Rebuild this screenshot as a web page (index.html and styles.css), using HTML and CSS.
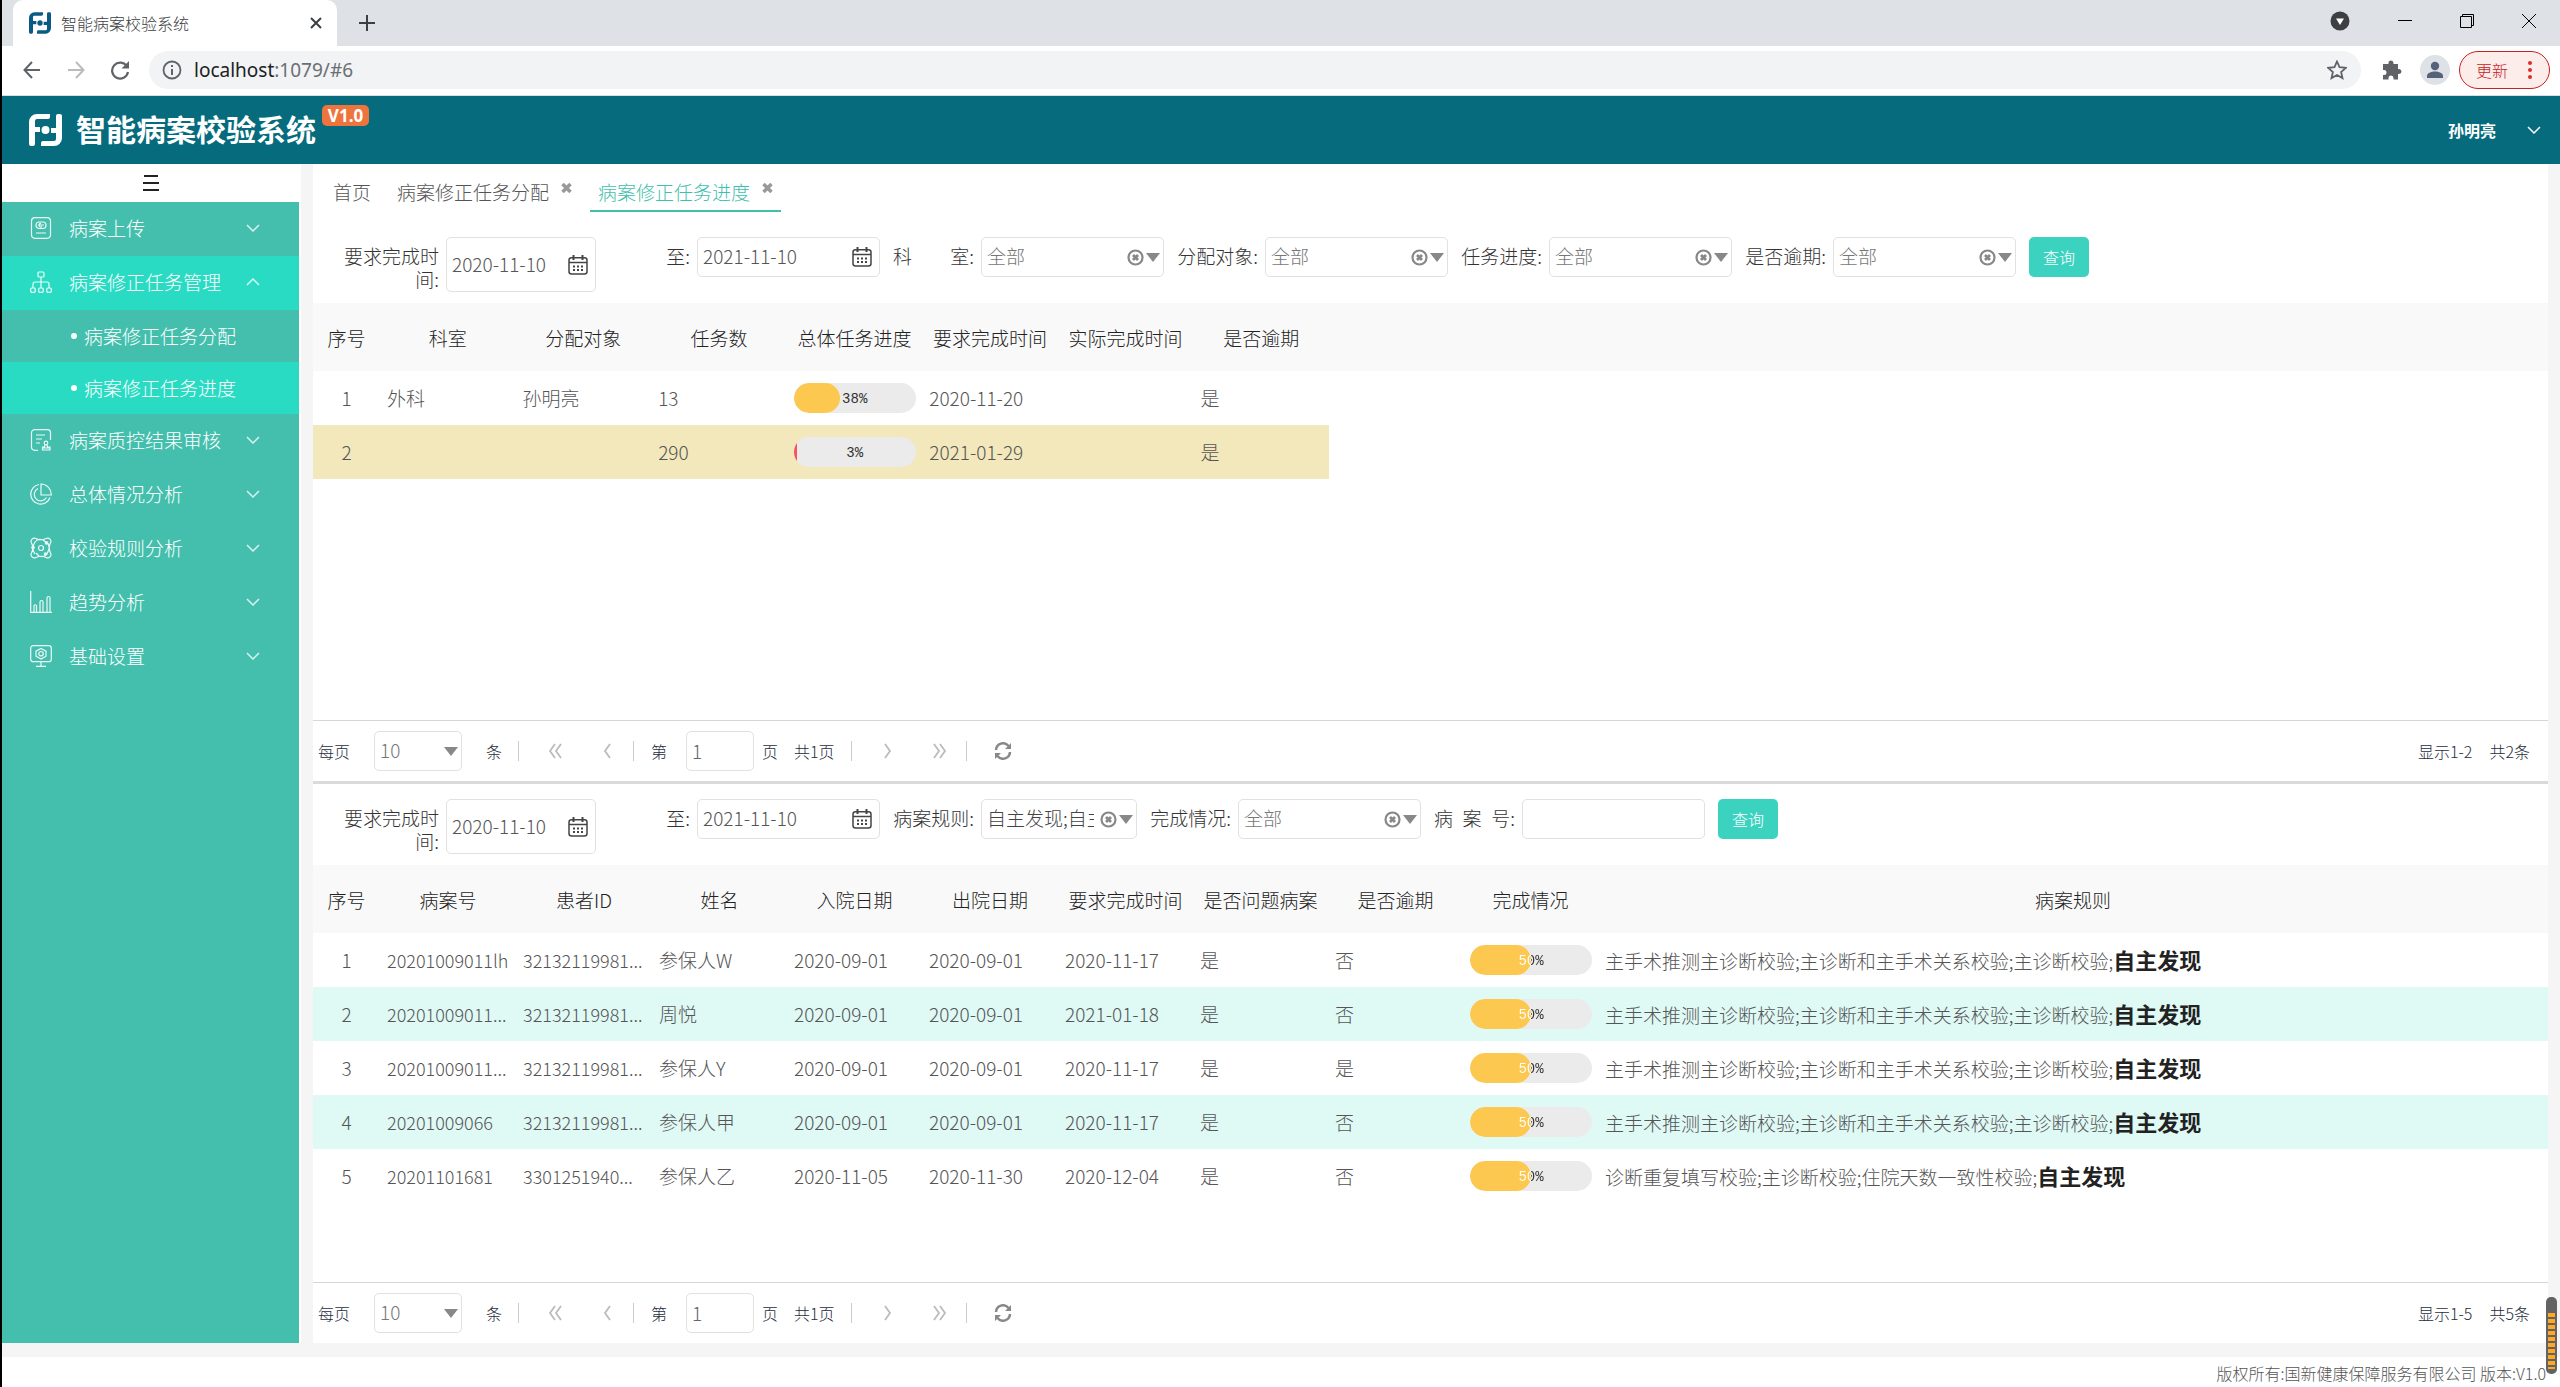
FILE: index.html
```html
<!DOCTYPE html>
<html lang="zh-CN">
<head>
<meta charset="utf-8">
<title>智能病案校验系统</title>
<link rel="stylesheet" href="styles.css">
</head>
<body>
<svg class="defs" aria-hidden="true">
  <symbol id="logo" viewBox="0 0 33 32"><path d="M0 30V8a8 8 0 0 1 8-8h13v3a2 2 0 0 1-2 2H8a2 2 0 0 0-2 2v6h5v5H6v12a2 2 0 0 1-2 2H2a2 2 0 0 1-2-2zM33 2v22a8 8 0 0 1-8 8H12v-3a2 2 0 0 1 2-2h11a2 2 0 0 0 2-2v-6h-5v-5h5V2a2 2 0 0 1 2-2h2a2 2 0 0 1 2 2z" fill="currentColor"/><circle cx="16.500" cy="16" r="4" fill="currentColor"/></symbol>
  <symbol id="down" viewBox="0 0 14 8"><path d="M1 1l6 6 6-6" fill="none" stroke="currentColor" stroke-width="1.500"/></symbol>
  <symbol id="cal" viewBox="0 0 20 20"><rect x="1" y="2.800" width="18" height="16.200" rx="2.500" fill="none" stroke="currentColor" stroke-width="1.500"/><path d="M1 7.500h18" stroke="currentColor" stroke-width="1.500"/><path d="M5.500 0v5M14.500 0v5" stroke="currentColor" stroke-width="2"/><path d="M5 11.500h2m2 0h2m2 0h2M5 15h2m2 0h2m2 0h2" stroke="currentColor" stroke-width="2"/></symbol>
  <symbol id="clear" viewBox="0 0 17 17"><circle cx="8.500" cy="8.500" r="7" fill="none" stroke="currentColor" stroke-width="2.200"/><path d="M6 6l5 5M11 6l-5 5" stroke="currentColor" stroke-width="2.800"/></symbol>
  <symbol id="caret" viewBox="0 0 14 9"><path d="M0 0h14L7 9z" fill="currentColor"/></symbol>
  <symbol id="cross" viewBox="0 0 11 12"><path d="M1.500 2l8 8M9.500 2l-8 8" stroke="currentColor" stroke-width="3.500"/></symbol>
  <symbol id="first" viewBox="0 0 14 18"><path d="M7 2L2 9l5 7M13 2L8 9l5 7" fill="none" stroke="currentColor" stroke-width="1.800"/></symbol>
  <symbol id="prev" viewBox="0 0 14 18"><path d="M10 2L5 9l5 7" fill="none" stroke="currentColor" stroke-width="1.800"/></symbol>
  <symbol id="next" viewBox="0 0 14 18"><path d="M4 2l5 7-5 7" fill="none" stroke="currentColor" stroke-width="1.800"/></symbol>
  <symbol id="last" viewBox="0 0 14 18"><path d="M1 2l5 7-5 7M7 2l5 7-5 7" fill="none" stroke="currentColor" stroke-width="1.800"/></symbol>
  <symbol id="reload" viewBox="0 0 18 18"><path d="M2 8a7 7 0 0 1 12.500-4M16 10a7 7 0 0 1-12.500 4" fill="none" stroke="currentColor" stroke-width="2.500"/><path d="M17 1v6h-6zM1 17v-6h6z" fill="currentColor"/></symbol>
</svg>

<header class="chrome">
  <div class="tabstrip">
    <div class="btab">
      <svg class="favicon"><use href="#logo"/></svg>
      <span>智能病案校验系统</span>
      <button class="plain btab-close" aria-label="关闭"><svg width="12" height="12" viewBox="0 0 12 12"><path d="M1 1l10 10M11 1L1 11" stroke="#3c4043" stroke-width="2"/></svg></button>
    </div>
    <button class="plain newtab" aria-label="新标签页"><svg width="16" height="16" viewBox="0 0 16 16"><path d="M8 0v16M0 8h16" stroke="#3c4043" stroke-width="2"/></svg></button>
    <div class="winctl">
      <svg width="20" height="20" viewBox="0 0 20 20"><circle cx="10" cy="10" r="9.500" fill="#3c4043"/><path d="M6 7.500h8L10 14z" fill="#fff"/></svg>
      <svg width="14" height="14" viewBox="0 0 14 14"><path d="M0 6.500h14" stroke="#000"/></svg>
      <svg width="14" height="14" viewBox="0 0 14 14"><path d="M.5 2.500h11v11H.5zM2.500 2.500v-2h11v11h-2" fill="none" stroke="#000"/></svg>
      <svg width="14" height="14" viewBox="0 0 14 14"><path d="M0 0l14 14M14 0L0 14" stroke="#000"/></svg>
    </div>
  </div>
  <div class="toolbar">
    <button class="plain nav" aria-label="后退"><svg width="18" height="18" viewBox="0 0 18 18"><path d="M17 9H2M9 1L1.500 9 9 17" fill="none" stroke="#5f6368" stroke-width="2"/></svg></button>
    <button class="plain nav" aria-label="前进"><svg width="18" height="18" viewBox="0 0 18 18"><path d="M1 9h15M9 1l7.500 8L9 17" fill="none" stroke="#b9bbbe" stroke-width="2"/></svg></button>
    <button class="plain nav" aria-label="刷新"><svg width="20" height="20" viewBox="0 0 20 20"><path d="M17 6.500A8 8 0 1 0 18 12" fill="none" stroke="#5f6368" stroke-width="2.200"/><path d="M19 1v7.500h-7.500z" fill="#5f6368"/></svg></button>
    <div class="address">
      <svg width="20" height="20" viewBox="0 0 20 20"><circle cx="10" cy="10" r="8.500" fill="none" stroke="#5f6368" stroke-width="1.800"/><path d="M10 9v6M10 5v2" stroke="#5f6368" stroke-width="2"/></svg>
      <span class="url"><b>localhost</b>:1079/#6</span>
      <svg width="20" height="20" viewBox="0 0 20 20"><path d="M10 1.500l2.500 5.700 6.300.6-4.700 4.200 1.400 6.100L10 15l-5.500 3.100L5.900 12 1.200 7.800l6.300-.6z" fill="none" stroke="#5f6368" stroke-width="1.800"/></svg>
    </div>
    <svg class="ext" width="20" height="20" viewBox="0 0 20 20"><path d="M1 4h5.500V3a2.500 2.500 0 0 1 5 0v1H16v5h1a2.500 2.500 0 0 1 0 5h-1v5.500h-4.500V18a2.500 2.500 0 0 0-5 0v1.500H1V15h1a2.500 2.500 0 0 0 0-5H1z" fill="#5f6368"/></svg>
    <svg class="avatar" width="30" height="30" viewBox="0 0 30 30"><circle cx="15" cy="15" r="15" fill="#dee1e6"/><circle cx="15" cy="11" r="4.200" fill="#56617a"/><path d="M7 23v-2c0-3 4-4.500 8-4.500s8 1.500 8 4.500v2z" fill="#56617a"/></svg>
    <button class="update">更新<svg width="4" height="18" viewBox="0 0 4 18"><g fill="#d93025"><circle cx="2" cy="2" r="2"/><circle cx="2" cy="9" r="2"/><circle cx="2" cy="16" r="2"/></g></svg></button>
  </div>
</header>

<header class="apphead">
  <svg class="brand"><use href="#logo"/></svg>
  <h1>智能病案校验系统</h1>
  <span class="ver">V1.0</span>
  <button class="plain user">孙明亮<svg width="14" height="8"><use href="#down"/></svg></button>
</header>

<div class="body">
  <nav class="side">
    <button class="plain burger" aria-label="菜单"><svg width="16" height="16" viewBox="0 0 16 16"><path d="M1 1h14M0 8h16M0 15h16" stroke="#222" stroke-width="2"/></svg></button>
    <button class="plain item"><svg class="ico" viewBox="0 0 22 22"><rect x="1.500" y=".7" width="19" height="20.600" rx="3.500"/><rect x="6" y="5" width="10" height="6.500" rx="3"/><path d="M9 8h5M11 6.500a1.800 1.800 0 1 0 1 3M6 16h10"/></svg>病案上传<svg class="arr"><use href="#down"/></svg></button>
    <button class="plain item on open"><svg class="ico" viewBox="0 0 22 22"><rect x="8" y="1" width="6" height="5" rx="1"/><rect x=".7" y="17" width="4.500" height="4.300" rx="1"/><rect x="8.700" y="17" width="4.500" height="4.300" rx="1"/><rect x="16.800" y="17" width="4.500" height="4.300" rx="1"/><path d="M11 6v11M3 17v-4a2 2 0 0 1 2-2h12a2 2 0 0 1 2 2v4"/></svg>病案修正任务管理<svg class="arr"><use href="#down"/></svg></button>
    <a class="sub" href="#5">病案修正任务分配</a>
    <a class="sub on" href="#6">病案修正任务进度</a>
    <button class="plain item"><svg class="ico" viewBox="0 0 22 22"><path d="M8 21.300H4.500a3 3 0 0 1-3-3v-14.600a3 3 0 0 1 3-3h13a3 3 0 0 1 3 3V11M6 6h9M6 10h6M6 14h4"/><circle cx="16" cy="14" r="1.800"/><path d="M15 16l-.5 2h-2v3h7.500v-3h-2.500l-.5-2M12.500 19h7.500"/></svg>病案质控结果审核<svg class="arr"><use href="#down"/></svg></button>
    <button class="plain item"><svg class="ico" viewBox="0 0 22 22"><path d="M9 1.500A9.900 9.900 0 1 0 20 14.500M11 1v11h10.300A10.500 10.500 0 0 0 11 1zM8 5.500a6.500 6.500 0 1 0 8.500 9"/></svg>总体情况分析<svg class="arr"><use href="#down"/></svg></button>
    <button class="plain item"><svg class="ico" viewBox="0 0 22 22"><path d="M6 1.500Q11 4 16 1.500C19 0 22 3 20.500 6Q18 11 20.500 16C22 19 19 22 16 20.500Q11 18 6 20.500C3 22 0 19 1.500 16Q4 11 1.500 6C0 3 3 0 6 1.500zM5 5Q7 2 11 2.500M17 17Q15 20 11 19.500M5 17Q2.500 14 3 10M17 5Q19.500 8 19 12M6 16l3 3M13 3l4 3M3 9l2-4M17 17l2-5"/><circle cx="11" cy="11" r="2.500"/><g fill="#fff"><circle cx="3" cy="10.500" r="1.200"/><circle cx="16.500" cy="6" r="1.200"/><circle cx="15.500" cy="17" r="1.200"/></g></svg>校验规则分析<svg class="arr"><use href="#down"/></svg></button>
    <button class="plain item"><svg class="ico" viewBox="0 0 22 22"><path d="M.7 0v21.300H22M4 21v-6a1.200 1.200 0 0 1 2.500 0v6M10 21V11a1.200 1.200 0 0 1 3 0v10M17 21V7a1.200 1.200 0 0 1 3 0v14"/></svg>趋势分析<svg class="arr"><use href="#down"/></svg></button>
    <button class="plain item"><svg class="ico" viewBox="0 0 22 22"><rect x=".7" y=".7" width="20.600" height="16" rx="2.500"/><path d="M11 17v4M6 21.300h10M11 3.500l5 2.700v5L11 14l-5-2.800v-5z"/><circle cx="11" cy="8.700" r="2.200"/></svg>基础设置<svg class="arr"><use href="#down"/></svg></button>
  </nav>

  <main class="main">
    <section class="panel">
      <div class="tabs">
        <a class="tab" href="#1">首页</a>
        <a class="tab" href="#5">病案修正任务分配<svg class="x"><use href="#cross"/></svg></a>
        <a class="tab active" href="#6">病案修正任务进度<svg class="x"><use href="#cross"/></svg></a>
      </div>
      <form class="filter">
        <div class="field"><label class="wrap" for="a1">要求完成时间:</label><span class="box tall"><input id="a1" value="2020-11-10"><svg class="cal"><use href="#cal"/></svg></span></div>
        <div class="field"><label for="a2">至:</label><span class="box"><input id="a2" value="2021-11-10"><svg class="cal"><use href="#cal"/></svg></span></div>
        <div class="field"><label class="spread" for="a3"><span>科</span><span>室:</span></label><span class="box"><select id="a3"><option>全部</option></select><svg class="clear"><use href="#clear"/></svg><svg class="caret"><use href="#caret"/></svg></span></div>
        <div class="field"><label for="a4">分配对象:</label><span class="box"><select id="a4"><option>全部</option></select><svg class="clear"><use href="#clear"/></svg><svg class="caret"><use href="#caret"/></svg></span></div>
        <div class="field"><label for="a5">任务进度:</label><span class="box"><select id="a5"><option>全部</option></select><svg class="clear"><use href="#clear"/></svg><svg class="caret"><use href="#caret"/></svg></span></div>
        <div class="field"><label for="a6">是否逾期:</label><span class="box"><select id="a6"><option>全部</option></select><svg class="clear"><use href="#clear"/></svg><svg class="caret"><use href="#caret"/></svg></span></div>
        <button class="query" type="button">查询</button>
      </form>
      <div class="grid">
        <table class="tasks">
          <thead><tr><th class="no">序号</th><th>科室</th><th>分配对象</th><th>任务数</th><th>总体任务进度</th><th>要求完成时间</th><th>实际完成时间</th><th>是否逾期</th></tr></thead>
          <tbody>
            <tr><td class="no">1</td><td>外科</td><td>孙明亮</td><td>13</td><td><div class="bar"><div class="fill" style="width:38%"></div><span class="pct">38%</span></div></td><td>2020-11-20</td><td></td><td>是</td></tr>
            <tr class="sel"><td class="no">2</td><td></td><td></td><td>290</td><td><div class="bar"><div class="fill low" style="width:3%"></div><span class="pct">3%</span></div></td><td>2021-01-29</td><td></td><td>是</td></tr>
          </tbody>
        </table>
      </div>
      <div class="pager">
        <label for="p1">每页</label>
        <span class="box size"><select id="p1"><option>10</option></select><svg class="caret"><use href="#caret"/></svg></span>
        <span class="unit">条</span><i class="sep"></i>
        <button class="plain pg" aria-label="首页"><svg><use href="#first"/></svg></button>
        <button class="plain pg" aria-label="上一页"><svg><use href="#prev"/></svg></button><i class="sep tight"></i>
        <label class="nth" for="n1">第</label><input class="page" id="n1" value="1"><span class="ye">页</span><span class="total">共1页</span><i class="sep"></i>
        <button class="plain pg" aria-label="下一页"><svg><use href="#next"/></svg></button>
        <button class="plain pg" aria-label="末页"><svg><use href="#last"/></svg></button><i class="sep tight"></i>
        <button class="plain pg dark" aria-label="刷新"><svg><use href="#reload"/></svg></button>
        <span class="info"><span>显示1-2</span><span>共2条</span></span>
      </div>
    </section>

    <section class="panel second">
      <form class="filter">
        <div class="field"><label class="wrap" for="b1">要求完成时间:</label><span class="box tall"><input id="b1" value="2020-11-10"><svg class="cal"><use href="#cal"/></svg></span></div>
        <div class="field"><label for="b2">至:</label><span class="box"><input id="b2" value="2021-11-10"><svg class="cal"><use href="#cal"/></svg></span></div>
        <div class="field"><label for="b3">病案规则:</label><span class="box narrow"><select id="b3"><option>自主发现;自主发现</option></select><svg class="clear"><use href="#clear"/></svg><svg class="caret"><use href="#caret"/></svg></span></div>
        <div class="field"><label for="b4">完成情况:</label><span class="box"><select id="b4"><option>全部</option></select><svg class="clear"><use href="#clear"/></svg><svg class="caret"><use href="#caret"/></svg></span></div>
        <div class="field"><label class="spread" for="b5"><span>病</span><span>案</span><span>号:</span></label><span class="box"><input id="b5"></span></div>
        <button class="query" type="button">查询</button>
      </form>
      <div class="grid">
        <table class="cases">
          <colgroup><col class="c-no"><col class="c-wide"><col class="c-wide"><col class="c-std"><col class="c-std"><col class="c-wide"><col class="c-std"><col class="c-std"><col class="c-std"><col class="c-std"><col></colgroup>
          <thead><tr><th class="no">序号</th><th>病案号</th><th>患者ID</th><th>姓名</th><th>入院日期</th><th>出院日期</th><th>要求完成时间</th><th>是否问题病案</th><th>是否逾期</th><th>完成情况</th><th>病案规则</th></tr></thead>
          <tbody>
            <tr><td class="no">1</td><td class="id">20201009011lh</td><td class="id">32132119981...</td><td>参保人W</td><td>2020-09-01</td><td>2020-09-01</td><td>2020-11-17</td><td>是</td><td>否</td><td><div class="bar"><div class="fill" style="width:50%"></div><span class="pct half">50%</span></div></td><td>主手术推测主诊断校验;主诊断和主手术关系校验;主诊断校验;<strong>自主发现</strong></td></tr>
            <tr class="alt"><td class="no">2</td><td class="id">20201009011...</td><td class="id">32132119981...</td><td>周悦</td><td>2020-09-01</td><td>2020-09-01</td><td>2021-01-18</td><td>是</td><td>否</td><td><div class="bar"><div class="fill" style="width:50%"></div><span class="pct half">50%</span></div></td><td>主手术推测主诊断校验;主诊断和主手术关系校验;主诊断校验;<strong>自主发现</strong></td></tr>
            <tr><td class="no">3</td><td class="id">20201009011...</td><td class="id">32132119981...</td><td>参保人Y</td><td>2020-09-01</td><td>2020-09-01</td><td>2020-11-17</td><td>是</td><td>是</td><td><div class="bar"><div class="fill" style="width:50%"></div><span class="pct half">50%</span></div></td><td>主手术推测主诊断校验;主诊断和主手术关系校验;主诊断校验;<strong>自主发现</strong></td></tr>
            <tr class="alt"><td class="no">4</td><td class="id">20201009066</td><td class="id">32132119981...</td><td>参保人甲</td><td>2020-09-01</td><td>2020-09-01</td><td>2020-11-17</td><td>是</td><td>否</td><td><div class="bar"><div class="fill" style="width:50%"></div><span class="pct half">50%</span></div></td><td>主手术推测主诊断校验;主诊断和主手术关系校验;主诊断校验;<strong>自主发现</strong></td></tr>
            <tr><td class="no">5</td><td class="id">20201101681</td><td class="id">3301251940...</td><td>参保人乙</td><td>2020-11-05</td><td>2020-11-30</td><td>2020-12-04</td><td>是</td><td>否</td><td><div class="bar"><div class="fill" style="width:50%"></div><span class="pct half">50%</span></div></td><td>诊断重复填写校验;主诊断校验;住院天数一致性校验;<strong>自主发现</strong></td></tr>
          </tbody>
        </table>
      </div>
      <div class="pager">
        <label for="p2">每页</label>
        <span class="box size"><select id="p2"><option>10</option></select><svg class="caret"><use href="#caret"/></svg></span>
        <span class="unit">条</span><i class="sep"></i>
        <button class="plain pg" aria-label="首页"><svg><use href="#first"/></svg></button>
        <button class="plain pg" aria-label="上一页"><svg><use href="#prev"/></svg></button><i class="sep tight"></i>
        <label class="nth" for="n2">第</label><input class="page" id="n2" value="1"><span class="ye">页</span><span class="total">共1页</span><i class="sep"></i>
        <button class="plain pg" aria-label="下一页"><svg><use href="#next"/></svg></button>
        <button class="plain pg" aria-label="末页"><svg><use href="#last"/></svg></button><i class="sep tight"></i>
        <button class="plain pg dark" aria-label="刷新"><svg><use href="#reload"/></svg></button>
        <span class="info"><span>显示1-5</span><span>共5条</span></span>
      </div>
    </section>
  </main>
</div>
<footer class="foot">版权所有:国新健康保障服务有限公司 版本:V1.0</footer>
<div class="meter"></div>
</body>
</html>
```

FILE: styles.css
```css
* { box-sizing: border-box; }
body {
  margin: 0;
  min-height: 100vh;
  display: flex;
  flex-direction: column;
  border-left: 2px solid #000;
  background: #fff;
  color: #333;
  font: 300 19px/24px "Noto Sans CJK SC", sans-serif;
}
input, select, button { font: inherit; color: inherit; }
a { color: inherit; text-decoration: none; }
svg { flex: none; display: block; }
.defs { position: absolute; width: 0; height: 0; }
.plain { border: 0; background: none; padding: 0; display: flex; align-items: center; justify-content: center; }

/* browser bar */
.tabstrip { display: flex; align-items: center; height: 46px; background: #dee1e6; padding-left: 11px; }
.btab { display: flex; align-items: center; width: 324px; height: 46px; padding: 0 15px 0 16px; background: #fff; border-radius: 10px 10px 0 0; font-size: 16px; color: #3c4043; }
.favicon { width: 22px; height: 22px; margin-right: 10px; color: #0b5a85; }
.btab-close { margin-left: auto; }
.newtab { margin-left: 22px; }
.winctl { display: flex; align-items: center; margin-left: auto; padding: 0 24px 4px 0; gap: 48px; }
.toolbar { display: flex; align-items: center; height: 50px; padding: 0 10px 2px 20px; border-bottom: 1px solid #dadce0; }
.nav { width: 20px; margin-right: 24px; }
.nav:nth-of-type(3) { margin-right: 19px; }
.address { flex: 1; display: flex; align-items: center; height: 38px; padding: 0 14px 0 13px; border-radius: 19px; background: #f1f3f4; }
.url { flex: 1; margin-left: 12px; font: 400 19px/24px "Noto Sans", sans-serif; color: #6b6f74; }
.url b { font-weight: 400; color: #202124; }
.ext { margin-left: 21px; }
.avatar { margin-left: 18px; }
.update { display: flex; align-items: center; gap: 20px; margin-left: 9px; width: 91px; height: 38px; padding: 0 16px; border: 1px solid #c5221f; border-radius: 19px; background: #fcecea; color: #c5221f; font-size: 16px; white-space: nowrap; }

/* application header */
.apphead { display: flex; align-items: center; height: 68px; padding: 0 19px 0 27px; background: #056b7d; color: #fff; }
.brand { width: 33px; height: 32px; }
h1 { margin: 0 0 0 14px; padding-bottom: 5px; font-size: 30px; line-height: 40px; font-weight: 700; }
.ver { align-self: flex-start; margin: 9px 0 0 6px; width: 47px; height: 21px; border-radius: 5px; background: #ee743d; font: 700 17px/21px "Noto Sans", sans-serif; text-align: center; }
.user { margin-left: auto; gap: 31px; font-size: 16px; font-weight: 700; }

.body { flex: 1; display: flex; background: #f5f5f5; padding-bottom: 14px; }
.side { width: 299px; background: #44bfad; color: #fff; border-right: 2px solid #fff; }
.burger { width: 100%; height: 38px; background: #fff; }
.item { width: 100%; height: 54px; padding: 0 39px 2px 28px; justify-content: flex-start; }
.ico { width: 22px; height: 22px; margin-right: 17px; fill: none; stroke: #fff; stroke-width: 1.2; opacity: .9; }
.arr { width: 14px; height: 8px; margin-left: auto; opacity: .8; }
.open .arr { transform: rotate(180deg); }
.on { background: #2adbc3; }
.sub { display: flex; align-items: center; height: 52px; padding-left: 69px; }
.sub::before { content: ""; width: 6px; height: 6px; margin-right: 7px; border-radius: 3px; background: #fff; }

.main { flex: 1; min-width: 0; display: flex; flex-direction: column; margin: 0 12px; background: #fff; }
.panel { flex: auto; display: flex; flex-direction: column; }
.second { border-top: 3px solid #d9dbdb; padding-top: 1px; }
.tabs { display: flex; gap: 10px; height: 59px; padding-left: 12px; align-items: flex-start; }
.tab { display: flex; gap: 12px; height: 48px; padding: 16px 8px 0; color: #555; }
.active { color: #40bfac; border-bottom: 2px solid #40bfac; }
.x { width: 11px; height: 12px; margin-top: 2px; color: #999; }

.filter { display: flex; align-items: flex-start; gap: 13px; height: 80px; padding: 14px 0 0 26px; }
.field { display: flex; gap: 7px; }
.field label { width: 81px; padding-top: 7px; line-height: 23px; text-align: right; white-space: nowrap; }
.field .wrap { width: 100px; white-space: normal; }
.field .spread { display: flex; justify-content: space-between; }
.box { display: flex; align-items: center; width: 183px; height: 40px; padding: 0 3px 0 5px; border: 1px solid #e1e1e1; border-radius: 5px; background: #fff; }
.tall { width: 150px; height: 55px; }
.narrow { width: 156px; }
.box input, .box select { flex: 1; width: 0; min-width: 0; height: 30px; padding: 0 0 3px; border: 0; outline: 0; background: none; color: #555; appearance: none; text-overflow: clip; }
.box select { margin-right: 6px; color: #777; }
.narrow select { color: #444; }
.cal { width: 20px; height: 22px; margin-right: 4px; color: #444; }
.clear { width: 17px; height: 17px; margin-right: 2px; color: #888; }
.caret { width: 14px; height: 9px; color: #888; }
.query { width: 60px; height: 40px; padding: 0; border: 0; border-radius: 5px; background: #3bd2c0; color: #fff; font-size: 16px; }

.grid { flex: 1; min-height: 417px; background: linear-gradient(#f9f9f9 68px, #fff 68px); }
table { border-collapse: collapse; table-layout: fixed; }
.tasks { width: 1016px; }
.cases { width: 100%; }
.c-no, .no { width: 67px; }
.c-std { width: 135px; }
.c-wide { width: 136px; }
th { height: 68px; padding: 2px 0 0; font-weight: 300; text-align: center; white-space: nowrap; color: #222; }
td { height: 54px; padding: 0 0 1px 7px; white-space: nowrap; color: #555; }
td.no { padding: 0 0 1px; text-align: center; }
.id { font-size: 18px; }
.sel { background: #f2e8bb; }
.alt { background: #dff9f5; }
td strong { font-size: 22px; font-weight: 700; color: #222; }
.bar { position: relative; width: 122px; height: 30px; border-radius: 15px; overflow: hidden; background: #ebebeb; }
.fill { height: 30px; border-radius: 15px; background: #fdc84f; }
.low { border-radius: 0; background: #f8525a; }
.pct { position: absolute; inset: 0; font: 400 14px/32px "Liberation Mono", monospace; text-align: center; color: #333; }
.half { background: linear-gradient(90deg, #fff 50%, #333 50%); background-clip: text; color: transparent; }

.pager { display: flex; align-items: center; height: 61px; padding: 0 18px 0 5px; border-top: 1px solid #d6d6d6; font-size: 16px; color: #1f2d3d; }
.size { width: 88px; margin-left: 24px; font-size: 19px; }
.unit { margin-left: 24px; }
.sep { width: 1px; height: 20px; margin: 0 10px 0 16px; background: #ccc; }
.tight { margin-left: 0; }
.pg { width: 52px; height: 30px; color: #bbb; }
.pg svg { width: 14px; height: 18px; }
.dark { color: #888; }
.dark svg { width: 18px; }
.nth { margin: 0 19px 0 7px; }
.page { width: 68px; height: 40px; padding: 0 5px 2px; border: 1px solid #e1e1e1; border-radius: 5px; font-size: 19px; color: #666; }
.ye { margin: 0 16px 0 8px; }
.info { display: flex; gap: 17px; margin-left: auto; }

.foot { height: 30px; padding-right: 14px; font-size: 16px; line-height: 32px; text-align: right; color: #555; }
/* level indicator floating over the page edge */
.meter { position: absolute; right: 3px; bottom: 13px; width: 11px; height: 77px; border-radius: 5px; background: #636363; padding: 16px 2px 5px; }
.meter::before { content: ""; display: block; height: 56px; background: repeating-linear-gradient(#ffa726 0 4px, #636363 4px 6px); }
```
